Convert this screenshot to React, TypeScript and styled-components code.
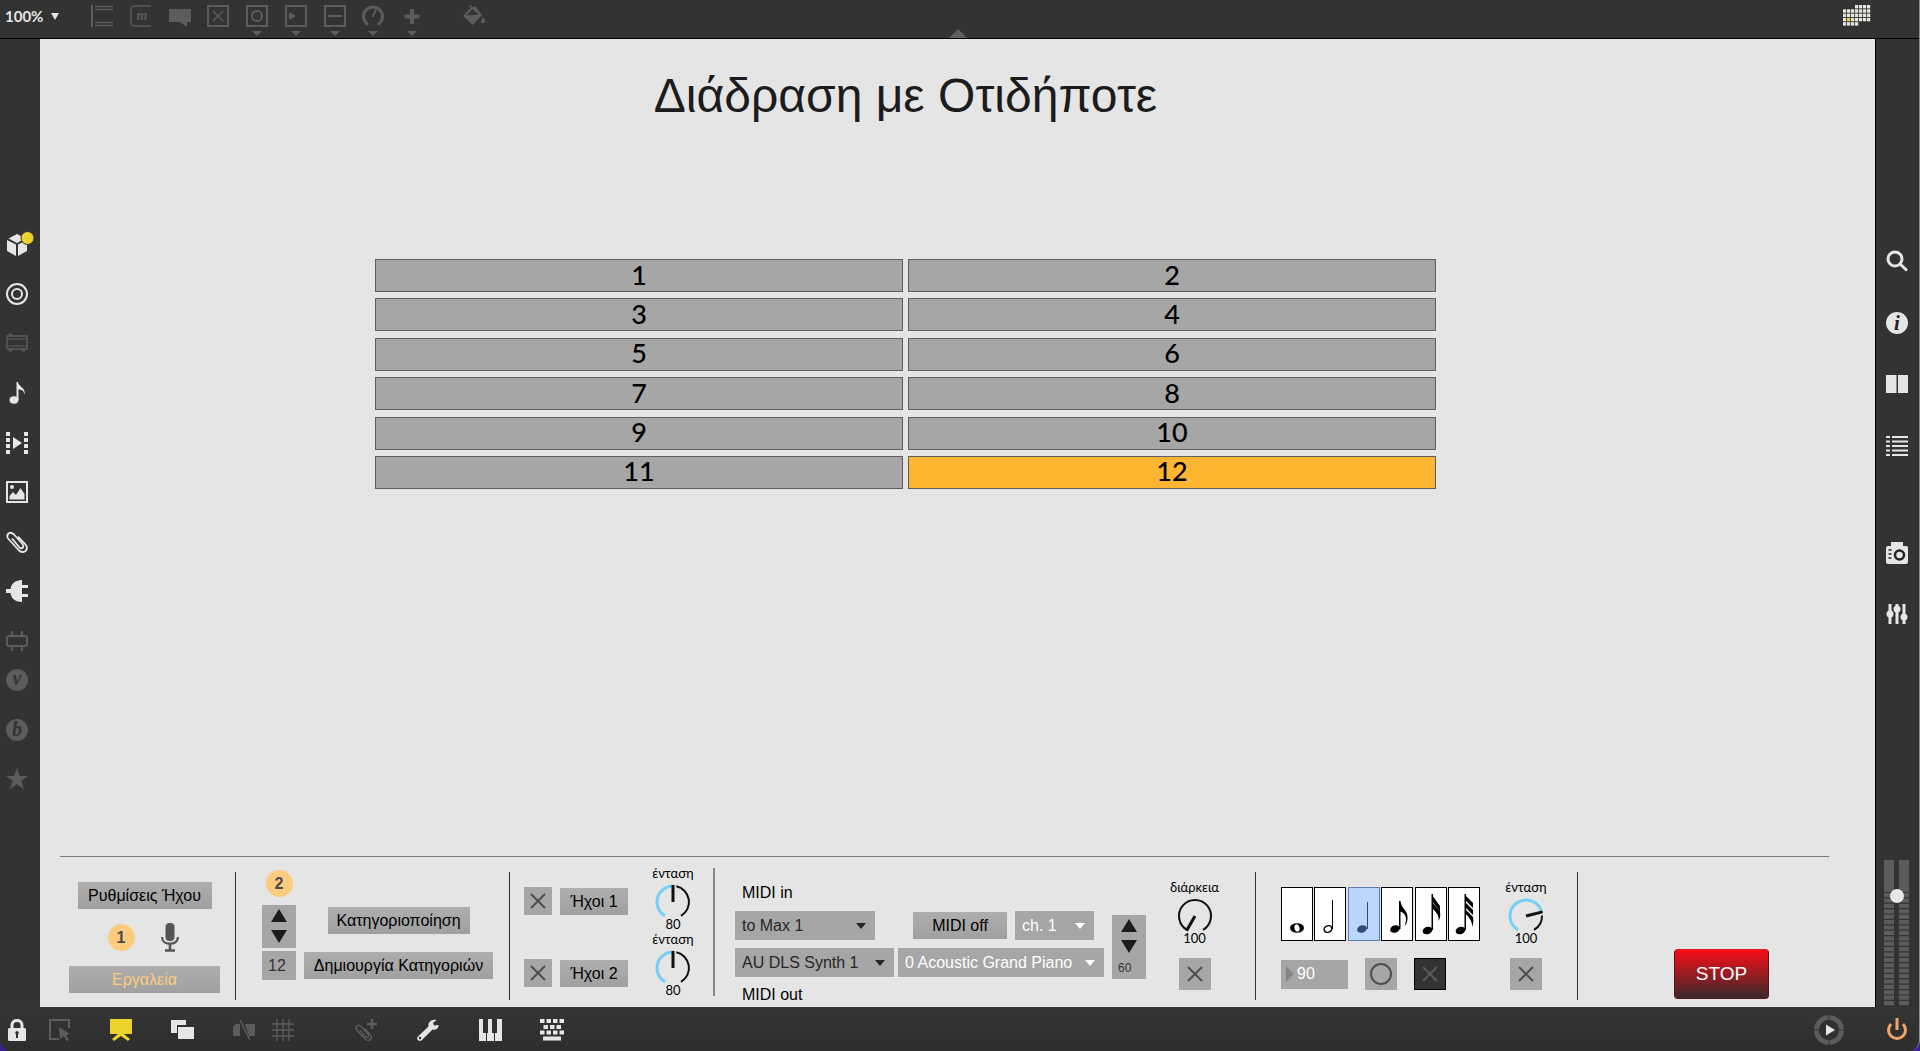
import React, { useState } from "react";
import styled, { createGlobalStyle } from "styled-components";

const SANS = '"Liberation Sans", Arial, sans-serif';
const ROUND = 'Lato, "Open Sans", sans-serif';
const BRIGHT = "#e6e6e6";
const DIM = "#5c5c5c";
const SKY = "#76cff4";

const GlobalStyle = createGlobalStyle`
  *, *::before, *::after { box-sizing: border-box; }
  body { margin: 0; background: #3b1fa0; font-family: ${SANS}; }
  button, input, select { font: inherit; color: inherit; margin: 0; }
  svg { display: block; flex: none; overflow: visible; }
`;

/* ---------- window frame ---------- */

const Window = styled.div`
  min-height: 100vh;
  display: grid;
  grid-template-rows: 39px 1fr 44px;
  background: #333;
  border-right: 1px solid #8d8d90;
  border-radius: 0 0 11px 11px;
  overflow: hidden;
`;

const TopBar = styled.header`
  display: flex;
  align-items: flex-start;
  padding: 0 48px 0 5px;
  border-bottom: 1px solid #000;
`;

const Middle = styled.div`
  display: grid;
  grid-template-columns: 40px 1fr 44px;
`;

const BottomBar = styled.footer`
  display: grid;
  grid-template-columns: 1fr 44px;
  background: linear-gradient(#353535, #2d2d2d);
`;

const BottomTools = styled.div`
  display: flex;
  align-items: center;
  padding: 2px 34px 0 5px;
`;

const PowerCell = styled.div`
  display: flex;
  align-items: center;
  justify-content: center;
`;

const ToolGroup = styled.div<{ $gap: number; $before?: number }>`
  display: flex;
  gap: ${(p) => p.$gap}px;
  margin-left: ${(p) => p.$before ?? 0}px;
`;

const Spacer = styled.div`
  flex: 1;
`;

const IconButton = styled.button<{ $dim?: boolean; $color?: string }>`
  display: flex;
  justify-content: center;
  width: 24px;
  padding: 0;
  border: 0;
  background: none;
  color: ${(p) => p.$color ?? (p.$dim ? DIM : BRIGHT)};
`;

const Zoom = styled.button`
  display: flex;
  align-items: center;
  gap: 8px;
  width: 85px;
  height: 32px;
  padding: 0;
  border: 0;
  background: none;
  color: ${BRIGHT};
  font-family: ${ROUND};
  font-size: 15px;
  font-weight: 700;
`;

const Palette = styled.div`
  display: flex;
  width: 334px;
  justify-content: space-between;
  padding-top: 5px;
`;

const PaletteItem = styled.button`
  display: grid;
  justify-items: center;
  gap: 4px;
  width: 24px;
  padding: 0;
  border: 0;
  background: none;
  color: ${DIM};
`;

const Bucket = styled(PaletteItem)`
  margin: 5px 0 0 38px;
`;

const Handle = styled.div`
  display: flex;
  flex: 1;
  align-self: flex-end;
  padding-left: 463px;
  color: #606060;
`;

const Corner = styled(IconButton)`
  width: 28px;
  margin-top: 5px;
`;

const Rail = styled.nav<{ $top: number; $gap: number }>`
  display: flex;
  flex-direction: column;
  align-items: center;
  gap: ${(p) => p.$gap}px;
  padding-top: ${(p) => p.$top}px;
`;

const LeftRail = styled(Rail)`
  padding-right: 6px;
`;

const RailGroup = styled.div<{ $height: number }>`
  display: flex;
  flex-direction: column;
  justify-content: space-between;
  height: ${(p) => p.$height}px;
`;

const RightSide = styled.aside`
  display: flex;
  flex-direction: column;
  align-items: center;
  justify-content: space-between;
  padding-right: 2px;
  border-left: 1px solid #000;
`;

const Meter = styled.label`
  display: grid;
  place-items: center;
  height: 148px;

  > * {
    grid-area: 1 / 1;
  }

  input {
    appearance: none;
    writing-mode: vertical-lr;
    direction: rtl;
    width: 26px;
    height: 146px;
    background: transparent;
  }

  input::-webkit-slider-thumb {
    appearance: none;
    width: 14px;
    height: 14px;
    border-radius: 50%;
    background: ${BRIGHT};
  }
`;

/* ---------- canvas ---------- */

const Canvas = styled.main`
  display: flex;
  flex-direction: column;
  background: #e5e5e5;
  color: #000;
`;

const Stage = styled.section`
  display: flex;
  flex-direction: column;
  align-items: center;
  padding: 27px 104px 0 0;
`;

const Title = styled.h1`
  margin: 0;
  color: #1c1c1c;
  font-size: 48px;
  font-weight: 400;
  line-height: 60px;
`;

const Choices = styled.div`
  display: grid;
  grid-template-columns: 1fr 1fr;
  grid-template-rows: repeat(6, 33px);
  align-content: space-between;
  column-gap: 5px;
  width: 100%;
  max-width: 1061px;
  height: 230px;
  margin-top: 133px;
`;

const Choice = styled.button<{ $on: boolean }>`
  padding: 0 0 2px;
  border: 1px solid #5f5f5f;
  background: ${(p) => (p.$on ? "#fdb532" : "#a6a6a6")};
  font-family: ${ROUND};
  font-size: 27px;
  font-weight: 500;
  line-height: 28px;
`;

const Panel = styled.section`
  display: flex;
  height: 151px;
  margin: auto 46px 0 20px;
  border-top: 1px solid #7c7c7c;
`;

const Rule = styled.div<{ $soft?: boolean }>`
  width: ${(p) => (p.$soft ? 2 : 1)}px;
  height: 128px;
  margin-top: ${(p) => (p.$soft ? 11 : 15)}px;
  background: ${(p) => (p.$soft ? "#85858b" : "#2c3145")};
`;

const Block = styled.div<{ $width: number; $left?: number; $gap?: number }>`
  display: flex;
  flex: none;
  gap: ${(p) => p.$gap ?? 0}px;
  width: ${(p) => p.$width}px;
  padding-left: ${(p) => p.$left ?? 0}px;
`;

const Column = styled.div<{ $top: number; $gap?: number; $center?: boolean; $width?: number }>`
  display: flex;
  flex-direction: column;
  align-items: ${(p) => (p.$center ? "center" : "flex-start")};
  gap: ${(p) => p.$gap ?? 0}px;
  width: ${(p) => (p.$width ? `${p.$width}px` : "auto")};
  padding-top: ${(p) => p.$top}px;
`;

const Row = styled.div<{ $gap: number }>`
  display: flex;
  align-items: center;
  gap: ${(p) => p.$gap}px;
`;

const TextButton = styled.button<{ $width: number; $tone?: string }>`
  width: ${(p) => p.$width}px;
  height: 27px;
  padding: 0;
  border: 0;
  background: linear-gradient(#aeaeae, #a0a0a0);
  color: ${(p) => p.$tone ?? "#000"};
  font-size: 16px;
  line-height: 27px;
  white-space: nowrap;
`;

const Badge = styled.span`
  display: grid;
  place-items: center;
  width: 27px;
  height: 27px;
  border-radius: 50%;
  background: #fdcb7e;
  color: #4a4a4a;
  font-size: 16px;
  font-weight: 700;
`;

const Stepper = styled.div<{ $height: number }>`
  display: flex;
  flex-direction: column;
  align-items: center;
  gap: 8px;
  width: 34px;
  height: ${(p) => p.$height}px;
  padding-top: 4px;
  background: #a6a6a6;

  button {
    padding: 0;
    border: 0;
    background: none;
    color: #1c1c1c;
  }
`;

const SmallNumber = styled.input`
  width: 100%;
  height: 13px;
  padding: 0 6px;
  border: 0;
  background: none;
  color: #333;
  font-size: 12px;
`;

const NumberBox = styled.input`
  width: 34px;
  height: 29px;
  padding: 0 6px;
  border: 0;
  background: #a6a6a6;
  color: #333;
  font-size: 16px;
`;

const Tempo = styled.label`
  display: flex;
  align-items: center;
  gap: 3px;
  width: 67px;
  height: 29px;
  padding-left: 5px;
  background: #a6a6a6;
  color: #858585;

  input {
    width: 48px;
    padding: 0;
    border: 0;
    background: none;
    color: #fff;
    font-size: 16px;
  }
`;

const Check = styled.label<{ $size: number; $dark?: boolean }>`
  display: grid;
  width: ${(p) => p.$size}px;
  height: ${(p) => p.$size}px;
  border: ${(p) => (p.$dark ? "1px solid #000" : "0")};
  background: ${(p) => (p.$dark ? "#333" : "#a6a6a6")};
  color: ${(p) => (p.$dark ? "#5a5a5a" : "#4f4f4f")};

  > * {
    grid-area: 1 / 1;
    place-self: center;
  }

  input {
    appearance: none;
    width: 100%;
    height: 100%;
  }

  svg {
    pointer-events: none;
  }
`;

const Bang = styled.button`
  display: grid;
  place-items: center;
  width: 32px;
  height: 32px;
  padding: 0;
  border: 0;
  background: #a6a6a6;
  color: #4f4f4f;
`;

const Menu = styled.div<{ $width: number; $light?: boolean }>`
  display: grid;
  align-items: center;
  width: ${(p) => p.$width}px;
  height: 29px;
  background: #a6a6a6;
  color: ${(p) => (p.$light ? "#fff" : "#262626")};

  > * {
    grid-area: 1 / 1;
  }

  select {
    appearance: none;
    width: 100%;
    height: 29px;
    padding: 0 0 0 7px;
    border: 0;
    background: none;
    font-size: 16px;
  }

  svg {
    justify-self: end;
    margin-right: 9px;
    pointer-events: none;
  }
`;

const Caption = styled.span`
  padding-left: 7px;
  font-size: 16px;
  line-height: 20px;
`;

const DialBox = styled.div`
  display: flex;
  flex-direction: column;
  align-items: center;
  width: 60px;
  font-family: ${ROUND};
  font-size: 13px;
  line-height: 16px;

  svg {
    margin: 3px 0 -2px;
  }
`;

const DialValue = styled.span`
  line-height: 13px;
`;

const Notes = styled.div`
  display: flex;
  justify-content: space-between;
  width: 199px;
`;

const Note = styled.label<{ $on: boolean }>`
  display: grid;
  width: 32px;
  height: 54px;
  border: 1px solid ${(p) => (p.$on ? "#5d7fae" : "#000")};
  background: ${(p) => (p.$on ? "#b9d6fd" : "#fff")};
  color: ${(p) => (p.$on ? "#2f4a74" : "#000")};

  > * {
    grid-area: 1 / 1;
  }

  input {
    appearance: none;
  }

  svg {
    pointer-events: none;
  }
`;

const Stop = styled.button`
  width: 95px;
  height: 50px;
  padding: 0;
  border: 1px solid #5a1518;
  border-top-color: #e01c22;
  border-radius: 4px;
  background: linear-gradient(#f80d17, #3a2a2c);
  color: #fff;
  font-size: 19px;
`;

/* ---------- icons ---------- */

type IconProps = { w?: number; h?: number; children: React.ReactNode };

const Icon = ({ w = 22, h = 22, children }: IconProps) => (
  <svg width={w} height={h} viewBox={`0 0 ${w} ${h}`} fill="none" stroke="currentColor" strokeWidth="2" aria-hidden="true">
    {children}
  </svg>
);

const Solid = ({ w = 22, h = 22, children }: IconProps) => (
  <svg width={w} height={h} viewBox={`0 0 ${w} ${h}`} fill="currentColor" aria-hidden="true">
    {children}
  </svg>
);

const Caret = ({ w = 10, h = 5 }: { w?: number; h?: number }) => (
  <Solid w={w} h={h}>
    <path d={`M0 0H${w}L${w / 2} ${h}Z`} />
  </Solid>
);

const ArrowUp = ({ w = 16, h = 13 }: { w?: number; h?: number }) => (
  <Solid w={w} h={h}>
    <path d={`M0 ${h}H${w}L${w / 2} 0Z`} />
  </Solid>
);

const Cross = () => (
  <Icon w={18} h={18}>
    <path d="M2 2L16 16M16 2L2 16" />
  </Icon>
);

const PaperClip = ({ scale = 1, y = 0 }: { scale?: number; y?: number }) => (
  <path
    transform={`translate(0 ${y}) scale(${scale})`}
    strokeWidth="1.800"
    d="M6 7.500L13.500 16.500Q15.500 18 17 16.500Q18 15 16.500 13L8 3.500Q5 .5 2.500 2.500Q0 5 2.500 8L12.500 19Q16 22.500 19.500 20Q22.500 17 19.500 13.500L12 5.500"
  />
);

const letterStyle = { fontFamily: '"Liberation Serif", serif', fontStyle: "italic", fontWeight: 700 };

const paletteIcons: { name: string; icon: React.ReactNode; menu?: boolean }[] = [
  {
    name: "Object",
    icon: (
      <Icon>
        <path d="M1 0V22" />
        <path d="M4 1.500H22M4 4.500H22M4 17.500H22M4 20.500H22" strokeWidth="1.500" />
      </Icon>
    ),
  },
  {
    name: "Message",
    icon: (
      <Icon>
        <path d="M21 1H5Q1 1 1 5V17Q1 21 5 21H21" strokeWidth="1.500" />
        <text x="12" y="15" textAnchor="middle" fontSize="14" fill="currentColor" stroke="none" style={letterStyle}>
          m
        </text>
      </Icon>
    ),
  },
  {
    name: "Comment",
    icon: (
      <Solid>
        <path d="M0 4H22V17H18V22L11 17H0Z" />
      </Solid>
    ),
  },
  {
    name: "Toggle",
    icon: (
      <Icon>
        <rect x="1" y="1" width="20" height="20" />
        <path d="M6 6L16 16M16 6L6 16" strokeWidth="1.500" />
      </Icon>
    ),
  },
  {
    name: "Button",
    menu: true,
    icon: (
      <Icon>
        <rect x="1" y="1" width="20" height="20" />
        <circle cx="11" cy="11" r="5" />
      </Icon>
    ),
  },
  {
    name: "Number",
    menu: true,
    icon: (
      <Icon>
        <rect x="1" y="1" width="20" height="20" />
        <path d="M4 7L11 11L4 15Z" fill="currentColor" stroke="none" />
      </Icon>
    ),
  },
  {
    name: "Slider",
    menu: true,
    icon: (
      <Icon>
        <rect x="1" y="1" width="20" height="20" />
        <path d="M4 11H18" />
      </Icon>
    ),
  },
  {
    name: "Dial",
    menu: true,
    icon: (
      <Icon>
        <path d="M6 19.500A9.500 9.500 0 1 1 16 19.500" strokeWidth="3" />
        <path d="M10.500 12L14 4.500" />
      </Icon>
    ),
  },
  {
    name: "Add",
    menu: true,
    icon: (
      <Icon>
        <path d="M11 4V19M3.500 11.500H18.500" strokeWidth="4" />
      </Icon>
    ),
  },
];

const leftMain: { name: string; dim?: boolean; icon: React.ReactNode }[] = [
  {
    name: "Packages",
    icon: (
      <Solid>
        <path d="M11 1L19.500 5.500L11 10L2.500 5.500ZM1 7L10 11.500V23L1 18ZM21 7V18L12 23V11.500Z" />
        <circle cx="21.500" cy="5" r="6.500" fill="#ecd22d" stroke="#333" strokeWidth="1" />
      </Solid>
    ),
  },
  {
    name: "Objects",
    icon: (
      <Icon>
        <circle cx="11" cy="11" r="10" />
        <circle cx="11" cy="11" r="5" />
      </Icon>
    ),
  },
  {
    name: "Devices",
    dim: true,
    icon: (
      <Icon>
        <rect x="1" y="4" width="20" height="13" strokeWidth="1.500" />
        <path d="M2 7H20M2 14H20" strokeWidth="1" />
        <path d="M3 2.500H6M3 18.500H6M16 18.500H19" />
      </Icon>
    ),
  },
  {
    name: "Audio",
    icon: (
      <Solid>
        <ellipse cx="8" cy="18" rx="4.500" ry="3.700" />
        <path d="M10.500 0H12C12.500 5 20 5 18.500 13C18 8 15 7.500 12.500 7.500V18H10.500Z" />
      </Solid>
    ),
  },
  {
    name: "Video",
    icon: (
      <Solid>
        <path d="M7 5L16 11L7 17Z" />
        <path d="M2 0V22M20 0V22" stroke="currentColor" strokeWidth="4" strokeDasharray="4 2" />
      </Solid>
    ),
  },
  {
    name: "Images",
    icon: (
      <Icon>
        <rect x="1" y="1" width="20" height="20" />
        <circle cx="6" cy="6" r="2" fill="currentColor" stroke="none" />
        <path d="M3.500 18.500V15L7 11L10 14L14.500 7L18.500 13V18.500Z" fill="currentColor" stroke="none" />
      </Icon>
    ),
  },
  {
    name: "Attachments",
    icon: (
      <Icon>
        <PaperClip />
      </Icon>
    ),
  },
  {
    name: "Plug-ins",
    icon: (
      <Solid>
        <path d="M16 0V22C9 22 5 18 4.500 13H0V9H4.500C5 4 9 0 16 0Z" />
        <path d="M15 5H22V8H15ZM15 14H22V17H15Z" />
      </Solid>
    ),
  },
  {
    name: "Hardware",
    dim: true,
    icon: (
      <Icon>
        <rect x="1" y="6" width="20" height="10" rx="2" />
        <path d="M6 1V6M16 1V6M6 16V21M16 16V21" />
      </Icon>
    ),
  },
];

const leftExtra = [
  {
    name: "Vizzie",
    icon: (
      <Solid>
        <circle cx="11" cy="11" r="11" />
        <text x="11" y="16" textAnchor="middle" fontSize="20" fill="#333" style={letterStyle}>
          v
        </text>
      </Solid>
    ),
  },
  {
    name: "BEAP",
    icon: (
      <Solid>
        <circle cx="11" cy="11" r="11" />
        <text x="11" y="17" textAnchor="middle" fontSize="20" fill="#333" style={letterStyle}>
          b
        </text>
      </Solid>
    ),
  },
  {
    name: "Favorites",
    icon: (
      <Solid>
        <path d="M11 0L13.700 8H22L15.300 12.800L17.800 21L11 16L4.200 21L6.700 12.800L0 8H8.300Z" />
      </Solid>
    ),
  },
];

const rightMain = [
  {
    name: "Search",
    icon: (
      <Icon>
        <circle cx="9" cy="9" r="7" strokeWidth="3" />
        <path d="M14 14L21 20.500" strokeWidth="3" />
      </Icon>
    ),
  },
  {
    name: "Inspector",
    icon: (
      <Solid>
        <circle cx="11" cy="11" r="11" />
        <text x="11" y="18" textAnchor="middle" fontSize="21" fill="#222" style={letterStyle}>
          i
        </text>
      </Solid>
    ),
  },
  {
    name: "Reference",
    icon: (
      <Solid>
        <path d="M0 2H10.500V20H0ZM12 2H22V20H12Z" />
      </Solid>
    ),
  },
  {
    name: "Console",
    icon: (
      <Icon>
        <path d="M0 2H4M0 6.500H4M0 11H4M0 15.500H4M0 20H4M6 2H22M6 6.500H22M6 11H22M6 15.500H22M6 20H22" />
      </Icon>
    ),
  },
];

const rightExtra = [
  {
    name: "Snapshots",
    icon: (
      <Solid>
        <path d="M5 0H17V4H20Q22 4 22 6V20Q22 22 20 22H2Q0 22 0 20V6Q0 4 2 4H5Z" />
        <circle cx="13.500" cy="13" r="4.500" fill="none" stroke="#222" strokeWidth="2.500" />
        <path d="M2.500 8H5.500M2.500 12H5.500M2.500 16H5.500" stroke="#222" strokeWidth="1.500" />
      </Solid>
    ),
  },
  {
    name: "Parameters",
    icon: (
      <Icon>
        <path d="M4 1V21M11 1V21M18 1V21" strokeWidth="3" />
        <g fill="currentColor" stroke="none">
          <circle cx="4" cy="11" r="3.500" />
          <circle cx="11" cy="6" r="3.500" />
          <circle cx="18" cy="14" r="3.500" />
        </g>
      </Icon>
    ),
  },
];

const KeyboardIcon = () => (
  <Icon w={24} h={22}>
    <path d="M0 2H24M0 13.500H24" strokeWidth="4" strokeDasharray="4.500 2" />
    <path d="M3.500 8H21" strokeWidth="4" strokeDasharray="4.500 2" />
    <path d="M3 19.500H21" strokeWidth="4" />
  </Icon>
);

const CornerIcon = () => {
  const cells: React.ReactNode[] = [];
  for (let r = 0; r < 5; r++) {
    for (let c = 0; c < 7; c++) {
      if ((r === 0 && c < 3) || (r === 4 && c > 3)) continue;
      cells.push(
        <rect key={`${r}-${c}`} x={c * 4} y={r * 4.3} width="3.200" height="3.400" fill={r === 3 && c === 1 ? "#ecd22d" : "#e4e6df"} />
      );
    }
  }
  return (
    <Solid w={28} h={22}>
      {cells}
    </Solid>
  );
};

const MicIcon = () => (
  <Icon w={18} h={29}>
    <rect x="4.500" y="0" width="9" height="18" rx="4" fill="currentColor" stroke="none" />
    <path d="M1.200 14V15C1.200 22.500 16.800 22.500 16.800 15V14" strokeWidth="2.200" />
    <path d="M9 20V27M4 27.500H14" strokeWidth="2.600" />
  </Icon>
);

const MeterBars = () => {
  const segs: React.ReactNode[] = [];
  for (let i = 0; i < 21; i++) {
    const y = 33 + i * 5.4;
    segs.push(<path key={i} d={`M0 ${y}H10V${y + 4.2}H0ZM15 ${y}H25V${y + 4.2}H15Z`} />);
  }
  return (
    <svg width="25" height="146" viewBox="0 0 25 146" fill={DIM} aria-hidden="true">
      <path d="M0 0H10V32H0ZM15 0H25V32H15Z" />
      {segs}
    </svg>
  );
};

const head = <ellipse cx="13" cy="41" rx="5" ry="3.600" transform="rotate(-20 13 41)" />;

const noteShapes: { name: string; art: React.ReactNode }[] = [
  {
    name: "Whole",
    art: (
      <>
        <ellipse cx="15" cy="40" rx="7" ry="4.800" />
        <ellipse cx="15" cy="40" rx="2.500" ry="3.700" fill="#fff" transform="rotate(-15 15 40)" />
      </>
    ),
  },
  {
    name: "Half",
    art: (
      <>
        <ellipse cx="13" cy="41" rx="4" ry="3.200" fill="none" stroke="currentColor" strokeWidth="1.500" transform="rotate(-25 13 41)" />
        <path d="M17 12H18V41H17Z" />
      </>
    ),
  },
  {
    name: "Quarter",
    art: (
      <>
        {head}
        <path d="M18 14H19V41H18Z" />
      </>
    ),
  },
  {
    name: "Eighth",
    art: (
      <>
        {head}
        <path d="M17 13H18.500C19 21 26.500 22 25.500 31C25 35 24 37 22.500 38C26 30 23 25 18.500 23.500V41H17Z" />
      </>
    ),
  },
  {
    name: "Sixteenth",
    art: (
      <>
        <ellipse cx="11.500" cy="42.500" rx="5" ry="3.600" transform="rotate(-20 11.500 42.500)" />
        <path d="M15.500 6H17V42H15.500Z" />
        <path d="M16 7L24 18V24L16 13ZM16 14L24 24Q25 29 22.500 33Q24 27 16 20Z" />
      </>
    ),
  },
  {
    name: "Thirty-second",
    art: (
      <>
        <ellipse cx="11.500" cy="42.500" rx="5" ry="3.600" transform="rotate(-20 11.500 42.500)" />
        <path d="M15.500 6H17V42H15.500Z" />
        <path d="M16 7L24 15V20L16 12ZM16 14L24 22V27L16 19ZM16 21L24 29Q25 35 23 39Q24 33 16 25Z" />
      </>
    ),
  },
];

/* ---------- controls ---------- */

const polar = (deg: number, r: number) => {
  const a = (deg * Math.PI) / 180;
  return `${(18 + r * Math.sin(a)).toFixed(2)} ${(18 - r * Math.cos(a)).toFixed(2)}`;
};

const arc = (from: number, to: number) => `M${polar(from, 16)}A16 16 0 ${to - from > 180 ? 1 : 0} 1 ${polar(to, 16)}`;

const Dial = ({ label, value, angle }: { label: string; value: number; angle: number }) => (
  <DialBox role="slider" aria-label={label} aria-valuenow={value} tabIndex={0}>
    <span>{label}</span>
    <svg width="36" height="36" viewBox="0 0 36 36" fill="none" strokeWidth="3" aria-hidden="true">
      {angle > -150 && <path d={arc(-150, angle)} stroke={SKY} />}
      <path d={arc(angle > -150 ? angle + 12 : -150, 150)} stroke="#111" strokeWidth="2" />
      <path d={`M18 18L${polar(angle, 17)}`} stroke="#111" />
    </svg>
    <DialValue>{value}</DialValue>
  </DialBox>
);

const Toggle = ({ label, size = 28, dark }: { label: string; size?: number; dark?: boolean }) => (
  <Check $size={size} $dark={dark}>
    <input type="checkbox" aria-label={label} />
    <Cross />
  </Check>
);

const Dropdown = ({ label, value, width, light }: { label: string; value: string; width: number; light?: boolean }) => (
  <Menu $width={width} $light={light}>
    <select aria-label={label} defaultValue={value}>
      <option>{value}</option>
    </select>
    <Caret w={10} h={6} />
  </Menu>
);

const Arrows = () => (
  <>
    <button aria-label="Up">
      <ArrowUp />
    </button>
    <button aria-label="Down">
      <Caret w={16} h={13} />
    </button>
  </>
);

export default function App() {
  const [choice, setChoice] = useState(12);
  const [note, setNote] = useState("Quarter");

  return (
    <>
      <GlobalStyle />
      <Window>
        <TopBar>
          <Zoom>
            100%
            <Caret w={8} h={7} />
          </Zoom>
          <Palette>
            {paletteIcons.map((p) => (
              <PaletteItem key={p.name} aria-label={p.name}>
                {p.icon}
                {p.menu && <Caret />}
              </PaletteItem>
            ))}
          </Palette>
          <Bucket aria-label="Format">
            <Solid>
              <path d="M0 11L8 2.500L6 1L7.500 0L10 2.500L12 1L19 10L10 20Z" />
              <path d="M3.500 10.500L9.500 4L15.500 9.500Z" fill="#333" />
              <path d="M20 12C23 16 22.500 18 20 18C17.500 18 17 16 20 12Z" />
            </Solid>
          </Bucket>
          <Handle>
            <ArrowUp w={18} h={9} />
          </Handle>
          <Corner aria-label="Calendar">
            <CornerIcon />
          </Corner>
        </TopBar>

        <Middle>
          <LeftRail $top={194} $gap={17} aria-label="Browsers">
            <RailGroup $height={419}>
              {leftMain.map((i) => (
                <IconButton key={i.name} $dim={i.dim} aria-label={i.name}>
                  {i.icon}
                </IconButton>
              ))}
            </RailGroup>
            <RailGroup $height={121}>
              {leftExtra.map((i) => (
                <IconButton key={i.name} $dim aria-label={i.name}>
                  {i.icon}
                </IconButton>
              ))}
            </RailGroup>
          </LeftRail>

          <Canvas>
            <Stage>
              <Title>Διάδραση με Οτιδήποτε</Title>
              <Choices>
                {Array.from({ length: 12 }, (_, i) => i + 1).map((n) => (
                  <Choice key={n} $on={n === choice} onClick={() => setChoice(n)}>
                    {n}
                  </Choice>
                ))}
              </Choices>
            </Stage>

            <Panel>
              <Block $width={175}>
                <Column $top={25} $gap={14} $center $width={169}>
                  <TextButton $width={134}>Ρυθμίσεις Ήχου</TextButton>
                  <Row $gap={23}>
                    <Badge>1</Badge>
                    <IconButton $color="#555" aria-label="Microphone">
                      <MicIcon />
                    </IconButton>
                  </Row>
                  <TextButton $width={151} $tone="#fdcb7e">
                    Εργαλεία
                  </TextButton>
                </Column>
              </Block>
              <Rule />

              <Block $width={273} $left={26} $gap={8}>
                <Column $top={13} $center>
                  <Badge>2</Badge>
                  <Column $top={8} $gap={3}>
                    <Stepper $height={43}>
                      <Arrows />
                    </Stepper>
                    <NumberBox aria-label="Κατηγορίες" defaultValue="12" />
                  </Column>
                </Column>
                <Column $top={50} $gap={18} $center>
                  <TextButton $width={142}>Κατηγοριοποίηση</TextButton>
                  <TextButton $width={189}>Δημιουργία Κατηγοριών</TextButton>
                </Column>
              </Block>
              <Rule />

              <Block $width={203} $left={14} $gap={15}>
                <Column $top={30} $gap={44}>
                  <Row $gap={8}>
                    <Toggle label="Ήχοι 1" />
                    <TextButton $width={68}>Ήχοι 1</TextButton>
                  </Row>
                  <Row $gap={8}>
                    <Toggle label="Ήχοι 2" />
                    <TextButton $width={68}>Ήχοι 2</TextButton>
                  </Row>
                </Column>
                <Column $top={8}>
                  <Dial label="ένταση" value={80} angle={0} />
                  <Dial label="ένταση" value={80} angle={0} />
                </Column>
              </Block>
              <Rule $soft />

              <Block $width={540} $left={20} $gap={8}>
                <Column $top={26} $gap={8} $width={369}>
                  <Caption>MIDI in</Caption>
                  <Row $gap={38}>
                    <Dropdown label="MIDI in" value="to Max 1" width={140} />
                    <Row $gap={8}>
                      <TextButton $width={94}>MIDI off</TextButton>
                      <Dropdown label="Channel" value="ch. 1" width={79} light />
                    </Row>
                  </Row>
                  <Row $gap={4}>
                    <Dropdown label="MIDI out" value="AU DLS Synth 1" width={159} />
                    <Dropdown label="Instrument" value="0 Acoustic Grand Piano" width={206} light />
                  </Row>
                  <Caption>MIDI out</Caption>
                </Column>
                <Column $top={58}>
                  <Stepper $height={64}>
                    <Arrows />
                    <SmallNumber aria-label="Note" defaultValue="60" />
                  </Stepper>
                </Column>
                <Column $top={22} $gap={13} $center $width={81}>
                  <Dial label="διάρκεια" value={100} angle={-150} />
                  <Toggle label="διάρκεια" size={32} />
                </Column>
              </Block>
              <Rule />

              <Block $width={321} $left={25} $gap={16}>
                <Column $top={30} $gap={17}>
                  <Notes role="radiogroup" aria-label="Note length">
                    {noteShapes.map((s) => (
                      <Note key={s.name} $on={s.name === note}>
                        <input type="radio" name="note" aria-label={s.name} checked={s.name === note} onChange={() => setNote(s.name)} />
                        <Solid w={30} h={52}>
                          {s.art}
                        </Solid>
                      </Note>
                    ))}
                  </Notes>
                  <Row $gap={17}>
                    <Tempo>
                      <Solid w={8} h={16}>
                        <path d="M0 0L8 8L0 16Z" />
                      </Solid>
                      <input aria-label="Tempo" defaultValue="90" />
                    </Tempo>
                    <Bang aria-label="Tap">
                      <Icon>
                        <circle cx="11" cy="11" r="10" />
                      </Icon>
                    </Bang>
                    <Toggle label="Metronome" size={32} dark />
                  </Row>
                </Column>
                <Column $top={22} $gap={13} $center>
                  <Dial label="ένταση" value={100} angle={76} />
                  <Toggle label="ένταση" size={32} />
                </Column>
              </Block>
              <Rule />

              <Block $width={191} $left={96}>
                <Column $top={92}>
                  <Stop>STOP</Stop>
                </Column>
              </Block>
            </Panel>
          </Canvas>

          <RightSide>
            <Rail $top={211} $gap={85} aria-label="Sidebars">
              <RailGroup $height={207}>
                {rightMain.map((i) => (
                  <IconButton key={i.name} aria-label={i.name}>
                    {i.icon}
                  </IconButton>
                ))}
              </RailGroup>
              <RailGroup $height={83}>
                {rightExtra.map((i) => (
                  <IconButton key={i.name} aria-label={i.name}>
                    {i.icon}
                  </IconButton>
                ))}
              </RailGroup>
            </Rail>
            <Meter>
              <MeterBars />
              <input type="range" aria-label="Output level" defaultValue={78} />
            </Meter>
          </RightSide>
        </Middle>

        <BottomBar>
          <BottomTools>
            <ToolGroup $gap={19}>
              <IconButton aria-label="Lock">
                <Solid w={18}>
                  <path d="M4 10V6C4 0 14 0 14 6V10" fill="none" stroke="currentColor" strokeWidth="3" />
                  <rect x="0" y="9" width="18" height="13" rx="1.500" />
                  <path d="M9 12a2 2 0 0 1 1 3.500V19H8V15.500A2 2 0 0 1 9 12Z" fill="#2d2d2d" />
                </Solid>
              </IconButton>
              <IconButton $dim aria-label="Select">
                <Icon>
                  <path d="M10 20H1V1H20V9" />
                  <path d="M10 8L21 15L17 16L20 21L17.500 22L15 17L11 20Z" fill="currentColor" stroke="none" />
                </Icon>
              </IconButton>
            </ToolGroup>
            <ToolGroup $gap={37} $before={37}>
              <IconButton $color="#ecd22d" aria-label="Presentation">
                <Solid>
                  <path d="M0 0H22V15H14L20 20L18 22L11 17L4 22L2 20L8 15H0Z" />
                </Solid>
              </IconButton>
              <IconButton aria-label="Patchers">
                <Solid w={23}>
                  <path d="M0 1H15V6H6V14H0ZM7 8H23V20H7Z" />
                </Solid>
              </IconButton>
            </ToolGroup>
            <ToolGroup $gap={15} $before={38}>
              <IconButton $dim aria-label="Mute">
                <Solid>
                  <path d="M0 7L3 5H7V17H0ZM12 5H22V17H16Z" />
                  <path d="M7 1L17 21" stroke="currentColor" strokeWidth="1.500" />
                </Solid>
              </IconButton>
              <IconButton $dim aria-label="Grid">
                <Icon>
                  <path d="M5 0V22M11 0V22M17 0V22M0 5H22M0 11H22M0 17H22" strokeWidth="1.300" />
                </Icon>
              </IconButton>
            </ToolGroup>
            <ToolGroup $gap={38} $before={59}>
              <IconButton $dim aria-label="Add attachment">
                <Icon>
                  <PaperClip scale={0.78} y={5} />
                  <path d="M17 0V10M12 5H22" strokeWidth="2.500" />
                </Icon>
              </IconButton>
              <IconButton aria-label="Tools">
                <Solid>
                  <path d="M19.500 1L16 4L17 6.500L21.500 6C22 9 19 11.500 15.500 10.500L5 21C2 23.500-1.500 20 1 17.500L11.500 7.500C10.500 3 15-.5 19.500 1Z" />
                  <circle cx="3" cy="19" r="1.200" fill="#2d2d2d" />
                </Solid>
              </IconButton>
              <IconButton aria-label="Piano">
                <Solid w={23}>
                  <path d="M0 0H4V14H7V22H0ZM8 22V14H9V0H13V14H15V22ZM16 22V14H18V0H23V22Z" />
                </Solid>
              </IconButton>
              <IconButton aria-label="Keyboard">
                <KeyboardIcon />
              </IconButton>
            </ToolGroup>
            <Spacer />
            <IconButton aria-label="Run">
              <svg width="30" height="30" viewBox="0 0 30 30" fill="none" aria-hidden="true">
                <circle cx="15" cy="15" r="12.500" stroke={DIM} strokeWidth="5" />
                <path d="M15 0V30M0 15H30" stroke="#303030" strokeWidth="1" />
                <circle cx="15" cy="15" r="10" fill="#303030" />
                <path d="M12 9.500L21 15L12 20.500Z" fill={BRIGHT} />
              </svg>
            </IconButton>
          </BottomTools>
          <PowerCell>
            <IconButton $color="#f5a467" aria-label="Audio on">
              <Icon>
                <path d="M5 6A8.500 8.500 0 1 0 17 6" strokeWidth="3" />
                <path d="M11 0V12" strokeWidth="3" />
              </Icon>
            </IconButton>
          </PowerCell>
        </BottomBar>
      </Window>
    </>
  );
}
